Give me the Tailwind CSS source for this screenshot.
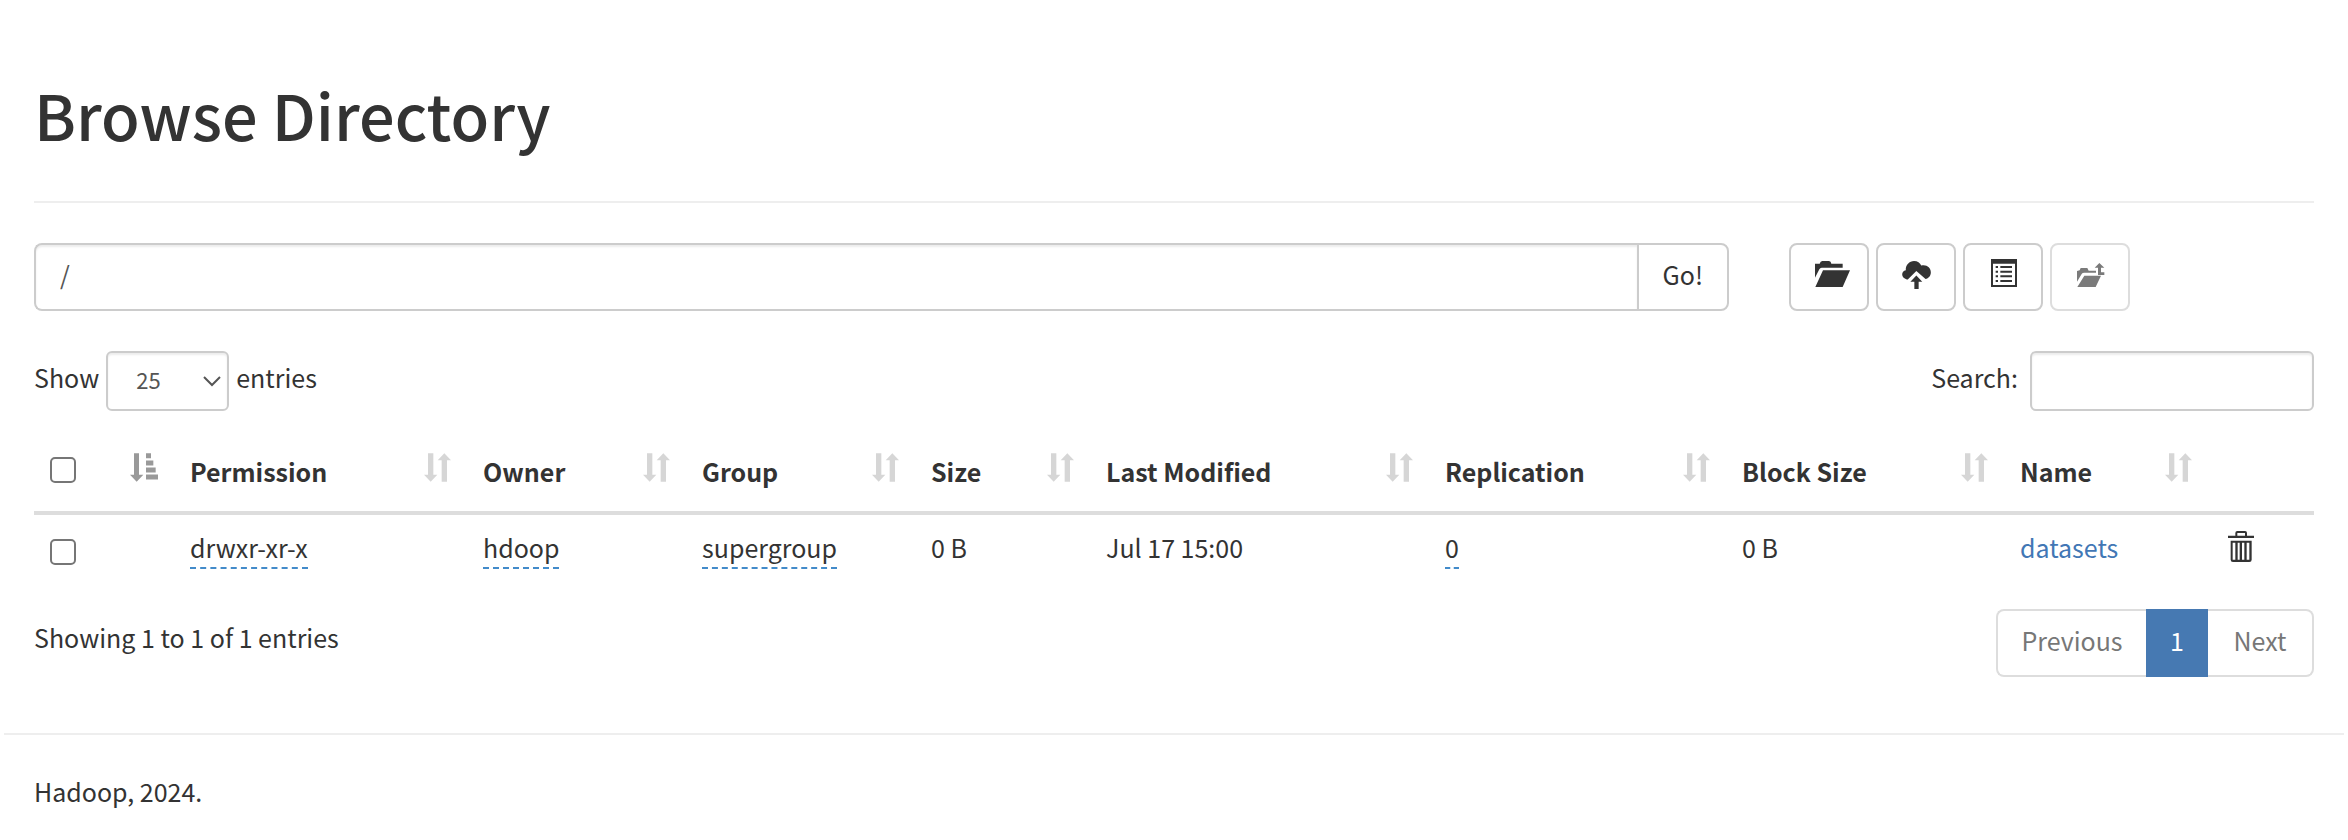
<!DOCTYPE html>
<html lang="en">
<head>
<meta charset="utf-8">
<title>Browse Directory</title>
<script src="https://cdn.jsdelivr.net/npm/@tailwindcss/browser@4"></script>
</head>
<body class="bg-white font-['Noto_Sans_CJK_KR','Noto_Sans',sans-serif] text-[25px] leading-10 text-[#333]">
<svg class="hidden">
  <symbol id="sort-both" viewBox="0 0 81 86"><path d="M12 0h16v65h12L20 86 0 65h12zM61 0l20 21H69v65H53V21H41z"/></symbol>
  <symbol id="sort-asc" viewBox="0 0 84 86"><path d="M12 0h15v65h13L20 86 0 65h12zM48 0h15v15H48zM48 22h22v15H48zM48 43h29v15H48zM48 64h36v15H48z"/></symbol>
</svg>
<main class="px-[34px] pt-[72px]">
  <h1 class="h-[129px] text-[63px] leading-[84px] font-medium">Browse Directory</h1>
  <hr class="border-t-2 border-[#eee]">

  <div class="mt-10 grid grid-cols-4 gap-[60px]">
    <form class="col-span-3 flex h-[68px]">
      <input type="text" value="/" aria-label="Directory" class="min-w-0 flex-1 rounded-l-lg border-2 border-r-0 border-[#ccc] px-6 pb-1.5 text-[#555] shadow-[inset_0_2px_2px_rgba(0,0,0,0.075)]">
      <button type="button" class="rounded-r-lg border-2 border-[#ccc] px-6 pb-1.5">Go!</button>
    </form>
    <div class="flex gap-[7px]">
      <button type="button" aria-label="Create directory" class="flex h-[68px] w-20 justify-center rounded-lg border-2 border-[#ccc] pt-4 pl-1.5">
        <svg class="h-[26px] w-[35px]" viewBox="0 0 105 78" fill="#333"><path d="M0 8h14q2-8 8-8h20q6 0 7 8h34v12H20q-5 0-7 5L0 50zM24 28h81L83 78H1z"/></svg>
      </button>
      <button type="button" aria-label="Upload files" class="flex h-[68px] w-20 justify-center rounded-lg border-2 border-[#ccc] pt-4">
        <svg class="h-7 w-[29px]" viewBox="0 0 87 85" fill="#333"><path d="M14 56C5 53 0 48 0 41c0-7 4-12 11-13C10 12 22 0 36 0c11 0 18 5 22 14 16-4 29 6 29 20 0 12-7 18-16 21L43 30 17 56zM43 44l18 19H50v22H37V63H25z"/></svg>
      </button>
      <button type="button" aria-label="Cut and paste" class="flex h-[68px] w-20 justify-center rounded-lg border-2 border-[#ccc] pt-[14px] pl-0.5">
        <svg class="h-7 w-[26px]" viewBox="0 0 78 84" fill="#333"><path fill-rule="evenodd" d="M0 0h78v84H0zM6 14v64h66V14z"/><path d="M14 21h7v6h-7zM28 21h35v6H28zM14 35h7v6h-7zM28 35h35v6H28zM14 49h7v6h-7zM28 49h35v6H28zM14 63h7v6h-7zM28 63h35v6H28z"/></svg>
      </button>
      <button type="button" disabled aria-label="Parent directory" class="flex h-[68px] w-20 justify-center rounded-lg border-2 border-[#ddd] pt-[18px] pl-0.5">
        <svg class="h-6 w-7" viewBox="0 0 84 72" fill="#7a7a7a"><path d="M0 24l8-2 3-7h20l4 8h22v6H22q-6 0-8 4L0 56zM22 38h50L56 72H1zM67 0l15 14H72v14h10v8H63V14H53z"/></svg>
      </button>
    </div>
  </div>

  <div class="mt-10 flex justify-between">
    <label class="flex gap-[7px]">
      <span class="pt-1.5">Show</span>
      <span class="relative flex">
        <select class="h-[60px] w-[123px] appearance-none rounded-md border-2 border-[#ccc] pb-1 pl-7 text-[22px] text-[#555] shadow-[inset_0_2px_2px_rgba(0,0,0,0.075)]"><option>10</option><option selected>25</option><option>50</option></select>
        <svg class="pointer-events-none absolute top-[25px] right-2 h-[11px] w-[18px]" viewBox="0 0 18 11" fill="none" stroke="#555" stroke-width="2"><path d="M1 1l8 8 8-8"/></svg>
      </span>
      <span class="pt-1.5">entries</span>
    </label>
    <label class="flex gap-3"><span class="pt-1.5">Search:</span><input type="search" class="h-[60px] w-[284px] rounded-md border-2 border-[#ccc] px-5 shadow-[inset_0_2px_2px_rgba(0,0,0,0.075)]"></label>
  </div>

  <table class="mt-3 w-full table-fixed border-collapse text-left">
    <colgroup><col class="w-[140px]"><col class="w-[293px]"><col class="w-[219px]"><col class="w-[229px]"><col class="w-[175px]"><col class="w-[339px]"><col class="w-[297px]"><col class="w-[278px]"><col class="w-[204px]"><col class="w-[106px]"></colgroup>
    <thead>
      <tr class="h-[90px] border-b-4 border-[#ddd] align-top leading-9">
        <th class="px-4 pt-[30px]"><div class="flex justify-between"><input type="checkbox" aria-label="Select all" class="mt-1 size-[26px] appearance-none rounded-[5px] border-2 border-[#767676]"><svg class="h-[29px] w-7" fill="#999"><use href="#sort-asc"/></svg></div></th>
        <th class="px-4 pt-[30px]"><div class="flex justify-between">Permission<svg class="h-[29px] w-[27px]" fill="#d6d6d6"><use href="#sort-both"/></svg></div></th>
        <th class="px-4 pt-[30px]"><div class="flex justify-between">Owner<svg class="h-[29px] w-[27px]" fill="#d6d6d6"><use href="#sort-both"/></svg></div></th>
        <th class="px-4 pt-[30px]"><div class="flex justify-between">Group<svg class="h-[29px] w-[27px]" fill="#d6d6d6"><use href="#sort-both"/></svg></div></th>
        <th class="px-4 pt-[30px]"><div class="flex justify-between">Size<svg class="h-[29px] w-[27px]" fill="#d6d6d6"><use href="#sort-both"/></svg></div></th>
        <th class="px-4 pt-[30px]"><div class="flex justify-between">Last Modified<svg class="h-[29px] w-[27px]" fill="#d6d6d6"><use href="#sort-both"/></svg></div></th>
        <th class="px-4 pt-[30px]"><div class="flex justify-between">Replication<svg class="h-[29px] w-[27px]" fill="#d6d6d6"><use href="#sort-both"/></svg></div></th>
        <th class="px-4 pt-[30px]"><div class="flex justify-between">Block Size<svg class="h-[29px] w-[27px]" fill="#d6d6d6"><use href="#sort-both"/></svg></div></th>
        <th class="px-4 pt-[30px]"><div class="flex justify-between">Name<svg class="h-[29px] w-[27px]" fill="#d6d6d6"><use href="#sort-both"/></svg></div></th>
        <th></th>
      </tr>
    </thead>
    <tbody>
      <tr class="h-[76px] align-top">
        <td class="px-4 pt-6"><input type="checkbox" aria-label="Select datasets" class="block size-[26px] appearance-none rounded-[5px] border-2 border-[#767676]"></td>
        <td class="px-4 pt-3"><span class="inline-block border-b-2 border-dashed border-[#428bca]">drwxr-xr-x</span></td>
        <td class="px-4 pt-3"><span class="inline-block border-b-2 border-dashed border-[#428bca]">hdoop</span></td>
        <td class="px-4 pt-3"><span class="inline-block border-b-2 border-dashed border-[#428bca]">supergroup</span></td>
        <td class="px-4 pt-3">0 B</td>
        <td class="px-4 pt-3">Jul 17 15:00</td>
        <td class="px-4 pt-3"><span class="inline-block border-b-2 border-dashed border-[#428bca]">0</span></td>
        <td class="px-4 pt-3">0 B</td>
        <td class="px-4 pt-3"><a href="#" class="text-[#4277b5]">datasets</a></td>
        <td class="px-5 pt-4"><button type="button" aria-label="Delete datasets" class="block"><svg class="h-[31px] w-[26px]" viewBox="0 0 78 93" fill="#333"><path fill-rule="evenodd" d="M0 14h22V6q0-6 6-6h23q6 0 6 6v8h21v7H0zM28 14h23V6H28zM8 29h63v57q0 7-7 7H15q-7 0-7-7zM14 35v51h8V35zM29 35v51h6V35zM42 35v51h7V35zM56 35v51h8V35z"/></svg></button></td>
      </tr>
    </tbody>
  </table>

  <div class="mt-5 flex justify-between">
    <p class="pt-2">Showing 1 to 1 of 1 entries</p>
    <nav class="flex h-[68px]" aria-label="Pages">
      <button type="button" class="w-[150px] rounded-l-lg border-2 border-r-0 border-[#ddd] pb-1.5 text-[#777]">Previous</button>
      <button type="button" class="w-[62px] bg-[#4679b2] pb-1.5 text-white">1</button>
      <button type="button" class="w-[106px] rounded-r-lg border-2 border-l-0 border-[#ddd] pb-1.5 text-[#777]">Next</button>
    </nav>
  </div>
</main>
<hr class="mx-1 mt-14 border-t-2 border-[#eee]">
<footer class="px-[34px] pt-9">Hadoop, 2024.</footer>
</body>
</html>
